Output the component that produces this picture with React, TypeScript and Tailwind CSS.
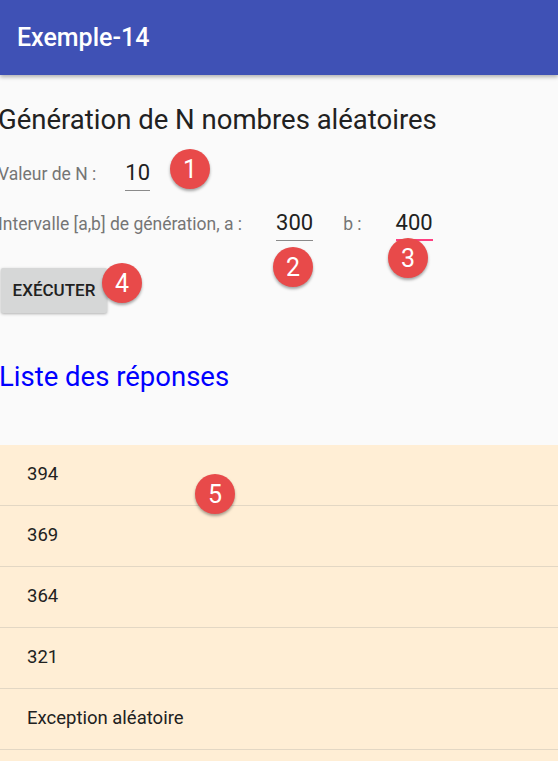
import React from "react";

function Badge({ n, x, y }: { n: string; x: number; y: number }) {
  return (
    <div
      className="absolute w-10 h-10 rounded-full bg-[#e84a4a] text-white text-[25px] leading-none flex items-center justify-center shadow-[0_2px_3px_rgba(0,0,0,0.35)]"
      style={{ left: x - 20, top: y - 20 }}
    >
      {n}
    </div>
  );
}

export default function App() {
  const rows = ["394", "369", "364", "321", "Exception aléatoire", ""];
  return (
    <div className="relative w-[558px] h-[761px] overflow-hidden bg-[#fafafa] font-['Roboto',sans-serif]">
      <div className="relative z-10 h-[75px] bg-[#3f51b5] flex items-center pl-[17px] shadow-[0_2px_4px_rgba(0,0,0,0.3)]">
        <span className="text-white text-[25px] font-medium leading-none">Exemple-14</span>
      </div>

      <div className="flex flex-col">
        <div className="mt-[29px] ml-[-2px] text-[27.5px] leading-[32px] text-[#212121]">
          Génération de N nombres aléatoires
        </div>

        <div className="mt-[24px] flex items-baseline ml-[-2px]">
          <span className="text-[17.5px] leading-[20px] text-[#757575]">Valeur de N :</span>
          <span className="ml-[29px] text-[22px] leading-[26px] pb-[4px] text-[#212121] border-b border-[#8a8a8a]">10</span>
        </div>

        <div className="mt-[19px] flex items-baseline ml-[-2px]">
          <span className="text-[17.5px] leading-[20px] text-[#757575]">Intervalle [a,b] de génération, a :</span>
          <span className="ml-[34px] text-[22px] leading-[26px] pb-[4px] text-[#212121] border-b border-[#8a8a8a]">300</span>
          <span className="ml-[30px] text-[17.5px] leading-[20px] text-[#757575]">b :</span>
          <span className="ml-[34px] text-[22px] leading-[26px] pb-[3px] text-[#212121] border-b-2 border-[#ff4081]">400</span>
        </div>

        <div className="mt-[27px] ml-[1px] flex">
          <div className="h-[45px] w-[106px] rounded-[2px] bg-[#d6d7d7] shadow-[0_1px_3px_rgba(0,0,0,0.3)] flex items-center justify-center text-[17px] font-medium text-[#212121]">
            EXÉCUTER
          </div>
        </div>

        <div className="mt-[48px] ml-[-1px] text-[27.5px] leading-[32px] text-[#0000ff]">Liste des réponses</div>

        <div className="mt-[52px] bg-[#ffeed5]">
          {rows.map((r, i) => (
            <div key={i} className="h-[61px] border-b border-[#e3d7c4] flex items-center pl-[27px] text-[18.5px] text-[#212121]">
              {r}
            </div>
          ))}
        </div>
      </div>

      <Badge n="1" x={190} y={169} />
      <Badge n="2" x={293} y={267} />
      <Badge n="3" x={408} y={258} />
      <Badge n="4" x={122} y={283} />
      <Badge n="5" x={215} y={494} />
    </div>
  );
}
